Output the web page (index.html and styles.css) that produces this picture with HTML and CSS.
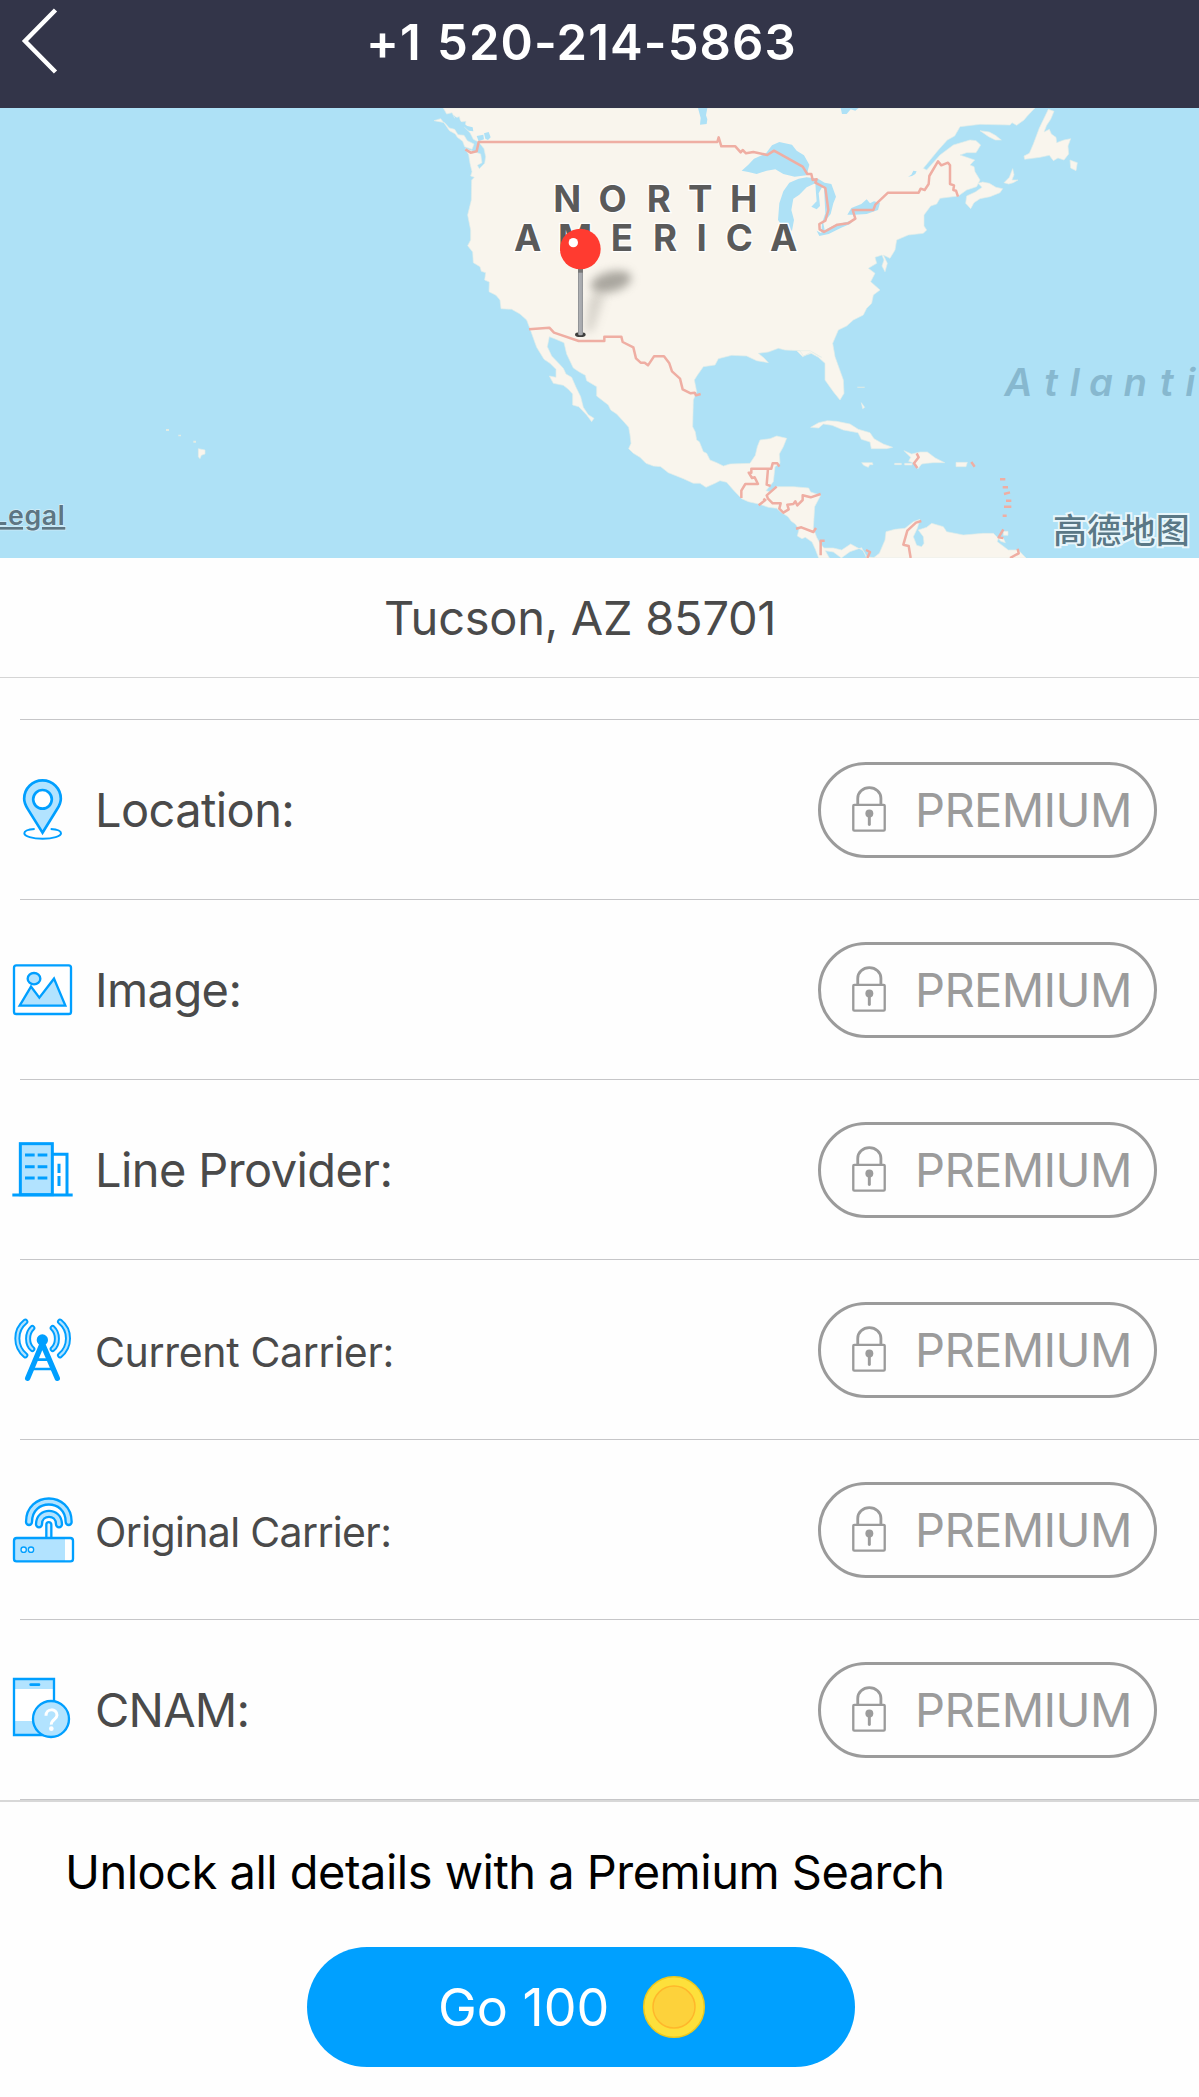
FILE: index.html
```html
<!DOCTYPE html>
<html lang="en">
<head>
<meta charset="utf-8">
<title>+1 520-214-5863</title>
<link rel="stylesheet" href="styles.css">
</head>
<body>
<svg class="defs" width="0" height="0" aria-hidden="true">
  <symbol id="lock" viewBox="156 138 102 139">
    <path d="M173 194V175a35 32 0 0 1 70 0v19" fill="none" stroke="currentColor" stroke-width="8.500"/>
    <rect x="159.500" y="195" width="95" height="78" rx="3" fill="none" stroke="currentColor" stroke-width="7"/>
    <circle cx="208" cy="221" r="12" fill="currentColor"/>
    <path d="M208 224V254" stroke="currentColor" stroke-width="9" stroke-linecap="round"/>
  </symbol>
</svg>

<header class="topbar">
  <svg class="back" width="40" height="68" viewBox="20 7 40 68"><path d="M55.500 10 25 41 55.500 72" fill="none" stroke="#fff" stroke-width="4.500"/></svg>
  <h1 class="title">+1<span class="gap"> </span>520-214-5863</h1>
</header>

<svg class="map" width="1199" height="450" viewBox="-1260 24 3597 1350" preserveAspectRatio="none">
  <defs>
    <filter id="soft" x="-60%" y="-80%" width="220%" height="260%"><feGaussianBlur stdDeviation="15"/></filter>
    <linearGradient id="stem" x1="0" x2="1"><stop offset="0" stop-color="#85878a"/><stop offset=".3" stop-color="#adafb3"/><stop offset=".7" stop-color="#a7a9ad"/><stop offset="1" stop-color="#8b8d90"/></linearGradient>
  </defs>
  <rect x="-1260" y="24" width="3597" height="1350" fill="#aee1f6"/>
  <g class="land">
    <path d="M70 24 80 42 96 38 104 54 118 50 122 66 138 64 134 82 150 98 160 118 176 126 192 146 197 170 194 190 178 206 172 196 186 188 182 162 166 156 136 146 146 164 150 190 156 215 152 228 163 232 155 240 154 300 143 345 152 390 152 420 143 437 158 456 160 488 180 500 184 514 197 518 194 540 208 546 207 575 228 586 240 600 243 626 275 628 300 642 320 660 330 686 342 720 350 742 366 768 372 778 390 790 408 808 408 832 388 828 400 850 430 856 445 868 458 882 458 915 476 920 500 945 515 965 522 955 505 944 490 922 482 890 468 862 455 832 438 822 430 805 418 792 395 768 382 740 388 710 408 718 432 728 440 762 460 804 478 816 496 826 500 842 530 860 530 888 565 915 572 930 590 942 612 966 626 982 630 1004 633 1030 626 1046 640 1060 660 1072 678 1090 700 1098 722 1100 745 1118 790 1136 820 1150 840 1150 858 1162 885 1150 900 1142 920 1147 940 1170 965 1196 985 1205 1020 1213 1045 1222 1070 1225 1082 1236 1104 1250 1114 1264 1126 1272 1137 1288 1132 1308 1146 1316 1156 1312 1176 1326 1186 1348 1196 1374 1228 1374 1216 1352 1240 1356 1264 1374 1290 1355 1325 1343 1340 1374 1360 1374 1378 1360 1395 1320 1398 1295 1425 1288 1455 1285 1480 1265 1500 1258 1492 1285 1480 1310 1490 1336 1505 1340 1512 1330 1510 1310 1495 1290 1520 1282 1535 1270 1570 1280 1580 1295 1630 1305 1690 1300 1720 1300 1735 1315 1732 1325 1745 1335 1765 1350 1795 1350 1818 1374 1370 1374 1340 1370 1330 1352 1310 1342 1292 1332 1265 1350 1240 1344 1212 1344 1200 1330 1190 1312 1180 1285 1184 1220 1202 1186 1172 1176 1166 1164 1120 1160 1070 1160 1050 1175 1038 1172 1048 1160 1060 1145 1065 1100 1080 1090 1078 1062 1090 1040 1100 1015 1070 1008 1050 1016 1020 1020 1012 1040 1006 1066 990 1090 930 1092 910 1098 890 1088 870 1080 860 1060 850 1055 838 1025 830 1020 826 996 818 980 820 900 830 875 823 840 832 826 850 800 885 795 895 776 935 766 980 768 1010 782 1045 788 1032 774 1015 760 1045 756 1075 745 1095 750 1140 752 1150 768 1180 758 1196 768 1205 772 1170 752 1130 752 1148 770 1170 758 1195 772 1215 790 1215 840 1240 875 1260 900 1272 880 1270 840 1245 770 1238 730 1255 690 1280 678 1300 660 1330 645 1340 625 1355 610 1360 585 1380 570 1352 545 1365 520 1345 505 1370 490 1365 472 1386 465 1392 480 1386 498 1395 515 1402 490 1390 465 1410 475 1425 450 1430 420 1465 405 1510 400 1520 390 1512 378 1512 345 1532 318 1550 312 1560 295 1615 288 1640 270 1670 260 1680 240 1665 215 1662 200 1650 195 1664 180 1620 165 1640 158 1668 158 1682 135 1668 122 1650 120 1600 135 1560 165 1520 210 1510 205 1555 150 1582 120 1604 108 1620 80 1680 73 1770 75 1776 68 1790 76 1812 60 1822 48 1845 24Z"/>
    <path d="M42 62 62 56 76 74 88 92 106 102 112 112 128 124 134 140 156 148 162 132 142 122 132 106 114 104 104 88 88 84 74 68Z"/>
    <path d="M1637 310 1652 326 1662 308 1680 296 1710 290 1740 278 1748 266 1728 262 1708 250 1688 246 1674 250 1686 262 1666 276 1640 288Z"/>
    <path d="M1752 248 1768 232 1778 206 1782 224 1776 240 1794 240 1780 248 1766 252Z"/>
    <path d="M1680 92 1708 96 1726 106 1744 120 1726 120 1706 110Z"/>
    <path d="M1885 28 1902 34 1892 58 1880 76 1872 96 1888 88 1894 102 1908 112 1910 128 1932 120 1952 116 1944 138 1946 162 1932 180 1914 174 1900 182 1888 166 1860 172 1814 178 1812 168 1828 160 1840 132 1858 84Z"/>
    <path d="M1950 180 1960 184 1972 188 1968 212 1952 204Z"/>
    <path d="M1172 982 1196 968 1222 962 1250 964 1290 972 1315 988 1350 998 1362 1016 1390 1032 1418 1042 1400 1046 1354 1046 1350 1026 1324 1018 1314 998 1270 990 1236 976 1210 972 1196 984Z"/>
    <path d="M1452 1052 1475 1062 1500 1056 1522 1056 1546 1074 1574 1088 1540 1088 1520 1090 1505 1092 1494 1106 1484 1090 1466 1084 1472 1072Z"/>
    <path d="M1325 1088h32l2 6h-10l-4 8-14-6zM1424 1090h20v4h-20zM1454 1090h22v5h-22zM1608 1087h34l-4 13h-30z"/>
    <path d="M1324 908 1334 922 1328 926ZM1750 1294h14v12h-14zM1734 1314h16l6 14-14-4z"/>
    <path d="M-665 1046-645 1050-645 1062-656 1066-660 1076-665 1070Z"/>
  </g>
  <path class="islet" d="M-762 987h9v6h-9zM-725 1004h8v5h-8zM-680 1022h8v6h-8zM1312 860h22v3h-22z"/>
  <g class="water">
    <path d="M100 44 124 66 142 78 158 82 160 94 146 92 130 78 116 74ZM170 108 190 104 192 118 176 124ZM192 100l14-4 6 16-8 8-8-4z"/>
    <path d="M834 24 862 24 858 46 862 58 860 72 840 74 842 54Z"/>
    <path d="M1262 24h54l-10 8-14-4-12 14h-14z"/>
    <path d="M1038 160 1056 136 1078 126 1116 134 1130 152 1152 166 1168 194 1160 226 1124 230 1090 222 1066 208 1040 212 1010 222 985 216 965 212 985 194 1002 176Z"/>
    <path d="M1160 232 1136 236 1108 248 1090 274 1078 310 1074 360 1092 386 1116 392 1122 360 1114 330 1120 296 1138 284 1160 262 1186 250 1188 280 1190 304 1174 320 1190 328 1200 318 1196 280 1206 262 1212 262 1216 340 1206 370 1204 400 1190 392 1198 408 1226 402 1262 384 1290 372 1302 360 1280 366 1246 374 1214 390 1210 370 1232 342 1240 310 1248 290 1234 252 1214 248 1194 236Z"/>
    <path d="M1282 344 1294 324 1324 312 1340 298 1350 310 1362 304 1380 308 1374 330 1340 342 1304 344Z"/>
    <path d="M1464 230 1474 224 1480 212 1490 214 1486 222 1476 228Z"/>
  </g>
  <g class="border">
    <path d="M136 148 152 158 170 154 176 126H892L896 112 904 139H946L962 157 968 150 978 160 1000 156 1042 165 1062 152 1148 200 1162 222 1174 222 1178 240 1190 238 1186 248 1216 264 1225 330 1216 362 1198 372 1199 388 1212 396 1252 374 1284 370 1306 356 1298 330H1360L1366 314 1404 278H1496L1502 266 1514 270 1526 252 1528 228 1554 184 1564 196 1584 188 1590 196V252L1602 256 1600 270 1608 272 1614 290"/>
    <path d="M327 688 388 683 402 698 476 723H553V710H604L608 726 640 742 648 775 662 788H674L684 796 702 769H732L748 790 756 814 780 836 788 868 812 880 824 878 828 886 842 882"/>
    <path d="M1078 1100 1072 1090H1058L1054 1106H994V1118H986L996 1134 1004 1132 1014 1152H976L964 1172V1194M1044 1106 1040 1154 1052 1158M1070 1160 1040 1186 1044 1196 1058 1210H1082L1078 1226 1090 1238 1106 1228 1102 1214 1120 1212 1126 1204 1132 1216 1148 1200V1186L1172 1192 1202 1182M1016 1216 1036 1200 1030 1196M1128 1286 1144 1282 1180 1296 1188 1284M1214 1322H1202V1366M1338 1350 1350 1356 1342 1374M1504 1263 1488 1268 1462 1292 1450 1334 1466 1338 1472 1374M1490 1060 1496 1072 1482 1090 1492 1104M1654 1086 1664 1100M1740 1138H1756M1748 1162H1764M1752 1182 1770 1177M1758 1202H1774M1752 1220H1774M1748 1247H1760M1750 1288 1736 1312 1750 1314M1770 1374 1796 1360 1793 1346"/>
  </g>
  <g class="continent">
    <text y="337" x="442 578 716 841 971">NORTH</text>
    <text y="454" x="323 465 606 735 845 958 1091">AMERICA</text>
  </g>
  <text class="ocean" y="887" x="1795 1893 1964 2043 2146 2240 2311">Atlanti</text>
  <g>
    <path d="M495 700 505 600 525 575 555 585 520 690Z" fill="#77736b" opacity=".25" filter="url(#soft)"/>
    <ellipse cx="573" cy="545" rx="62" ry="30" transform="rotate(-14 573 545)" fill="#6c6962" opacity=".56" filter="url(#soft)"/>
    <ellipse cx="481" cy="704" rx="16" ry="7" fill="#3e3f3d"/>
    <rect x="474" y="500" width="15" height="206" rx="5" fill="url(#stem)"/>
    <rect x="474" y="506" width="15" height="12" fill="#777"/>
    <circle cx="481" cy="447" r="61" fill="#ff3b30"/>
    <circle cx="460" cy="428" r="14" fill="#fff"/>
  </g>
  <text class="legal" x="-1064" y="1275">Legal</text>
  <text class="amap" x="1899" y="1328" textLength="410" lang="zh">高德地图</text>
</svg>

<section class="address"><p>Tucson, AZ 85701</p></section>

<ul class="details">
  <li class="row">
    <svg class="icon" viewBox="0 60 240 240">
      <path d="M104 237C86 238 73 243 73 250 73 259 97 266 128 266S183 259 183 250C183 243 170 238 152 237" fill="none" stroke="#009fff" stroke-width="6"/>
      <path d="M127.500 248 84 178C77 167 72.500 156 72.500 146A55 55 0 0 1 182.500 146C182.500 156 178 167 171 178Z" fill="#b2e3ff" stroke="#009fff" stroke-width="8"/>
      <circle cx="127.500" cy="148" r="28" fill="#fff" stroke="#009fff" stroke-width="8"/>
    </svg>
    <span class="label loc">Location:</span>
    <button class="pill"><svg><use href="#lock"/></svg><span>PREMIUM</span></button>
  </li>
  <li class="row">
    <svg class="icon" viewBox="0 600 240 240">
      <g stroke="#009fff" stroke-width="7"><rect x="42" y="646" width="171" height="146" rx="7" fill="#fff"/>
      <path d="M59 767 93 710 118 743 162 686 196 767Z" fill="#b2e3ff"/><ellipse cx="102" cy="686" rx="19" ry="17" fill="#b2e3ff"/></g>
    </svg>
    <span class="label img">Image:</span>
    <button class="pill"><svg><use href="#lock"/></svg><span>PREMIUM</span></button>
  </li>
  <li class="row">
    <svg class="icon" viewBox="0 60 240 240">
      <g stroke="#009fff" stroke-width="9"><path d="M157 133H201V255" fill="none"/><rect x="61" y="101" width="96" height="153" fill="#b2e3ff"/>
      <path d="M37 255H218M75 135H104M113 135H142M75 170H104M113 170H142M75 204H104M113 204H142M177 161V189M177 198V228" fill="none"/></g>
    </svg>
    <span class="label line">Line Provider:</span>
    <button class="pill"><svg><use href="#lock"/></svg><span>PREMIUM</span></button>
  </li>
  <li class="row">
    <svg class="icon" viewBox="0 600 240 240">
      <g fill="none" stroke-linecap="round">
        <g stroke="#009fff" stroke-width="18"><path d="M76 635C44 661 44 709 76 736M97 654C80 670 80 702 97 717M180 635C212 661 212 709 180 736M158 654C175 670 175 702 158 717"/></g>
        <g stroke="#b2e3ff" stroke-width="6.500"><path d="M76 635C44 661 44 709 76 736M97 654C80 670 80 702 97 717M180 635C212 661 212 709 180 736M158 654C175 670 175 702 158 717"/></g>
        <g stroke="#009fff"><path d="M83 805 127 700 172 805" stroke-width="16"/><path d="M112 749H143M98 777H157" stroke-width="8"/></g>
      </g>
      <circle cx="127" cy="690" r="17" fill="#009fff"/>
    </svg>
    <span class="label small cur">Current Carrier:</span>
    <button class="pill"><svg><use href="#lock"/></svg><span>PREMIUM</span></button>
  </li>
  <li class="row">
    <svg class="icon" viewBox="0 90 240 240">
      <g fill="none" stroke-linecap="round">
        <path d="M87 186C87 104 206 104 206 186M117 193C117 151 177 151 177 193" stroke="#009fff" stroke-width="25"/>
        <path d="M87 186C87 104 206 104 206 186M117 193C117 151 177 151 177 193" stroke="#b2e3ff" stroke-width="11"/>
      </g>
      <path d="M139 232V194a7.500 7.500 0 0 1 15 0V232" fill="#e0f4ff" stroke="#009fff" stroke-width="7"/>
      <rect x="42" y="234" width="177" height="70" rx="8" fill="#fff"/>
      <path d="M42 234H195V304H42Z" fill="#b2e3ff"/>
      <rect x="42" y="234" width="177" height="70" rx="8" fill="none" stroke="#009fff" stroke-width="7"/>
      <g fill="#e0f4ff" stroke="#009fff" stroke-width="4"><circle cx="71" cy="269" r="8"/><circle cx="93" cy="269" r="8"/></g>
    </svg>
    <span class="label small orig">Original Carrier:</span>
    <button class="pill"><svg><use href="#lock"/></svg><span>PREMIUM</span></button>
  </li>
  <li class="row">
    <svg class="icon" viewBox="0 630 240 240">
      <rect x="42" y="657" width="120" height="168" fill="#fff"/>
      <path d="M42 657H162V687H42ZM42 783H162V825H42Z" fill="#b2e3ff"/>
      <path d="M162 722V657H42V825H130" fill="none" stroke="#009fff" stroke-width="7"/>
      <path d="M92 674H117" stroke="#009fff" stroke-width="8" stroke-linecap="round"/>
      <path d="M150 780H170V840H140Z" fill="#fefefe"/>
      <circle cx="153" cy="777" r="54" fill="#b2e3ff" stroke="#009fff" stroke-width="7"/>
      <path d="M138 767C138 744 171 744 171 766 171 778 153 779 154 794" fill="none" stroke="#fff" stroke-width="9"/><circle cx="154" cy="806" r="7" fill="#fff"/>
    </svg>
    <span class="label cnam">CNAM:</span>
    <button class="pill"><svg><use href="#lock"/></svg><span>PREMIUM</span></button>
  </li>
</ul>

<footer class="unlock">
  <p class="pitch">Unlock all details with a Premium Search</p>
  <button class="go"><span>Go 100</span>
    <svg width="64" height="64" viewBox="0 0 64 64"><circle cx="32" cy="32" r="30.300" fill="#fde03b" stroke="#efc91b" stroke-width="1.500"/><circle cx="32" cy="32" r="21" fill="#fdd23b" stroke="#ffb72b" stroke-width="1.500"/></svg>
  </button>
</footer>
</body>
</html>
```
FILE: styles.css
```css
* { box-sizing: border-box; }
body {
  margin: 0;
  background: #fefefe;
  color: #4a4a4a;
  font-family: Inter, "Liberation Sans", sans-serif;
  overflow: hidden;
}
h1, p, ul { margin: 0; padding: 0; }
ul { list-style: none; }
button { font: inherit; margin: 0; }
.defs { display: block; height: 0; }

.topbar {
  height: 108px;
  padding: 7px 0 0 20px;
  display: flex;
  align-items: flex-start;
  background: #333549;
  color: #fff;
}
.back { flex: none; }
.title {
  margin-left: 306px;
  padding-top: 6px;
  line-height: 60px;
  font-size: 49px;
  font-weight: 600;
  letter-spacing: 1.1px;
  white-space: nowrap;
}
.gap { font-size: 36px; letter-spacing: 6px; }

.map { display: block; }
.land { fill: #f9f5ed; stroke: #e3ede8; stroke-width: 2; stroke-linejoin: round; }
.islet { fill: #e3ece4; }
.water { fill: #aee1f6; }
.border { fill: none; }
.border path { stroke: #efaea3; stroke-width: 7.5; stroke-linejoin: round; }
.continent { font-size: 110px; font-weight: 700; fill: #5a5a5a; stroke: #fff; stroke-width: 8; paint-order: stroke; text-anchor: middle; }
.ocean { font-size: 115px; font-weight: 600; font-style: italic; fill: #87b8cf; text-anchor: middle; }
.legal { font-size: 80px; font-weight: 600; letter-spacing: 2px; fill: #5d7683; stroke: #d5eef8; stroke-width: 4; paint-order: stroke; text-anchor: end; text-decoration: underline; }
.amap { font-family: "Noto Sans CJK SC", sans-serif; font-size: 102px; font-weight: 500; fill: #5a7886; stroke: #e8f6fb; stroke-width: 12; paint-order: stroke; }

.address {
  height: 120px;
  padding: 30px 0 0 384px;
  border-bottom: 1px solid #d5d5d5;
  font-size: 47px;
  line-height: 60px;
  letter-spacing: -.27px;
  white-space: nowrap;
}

.details { margin: 41px 0 0 20px; border-top: 1px solid #c6c6c8; }
.row {
  height: 180px;
  display: flex;
  align-items: flex-start;
  border-bottom: 1px solid #c6c6c8;
}
.icon { flex: none; width: 80px; height: 80px; margin: 50px 0 0 -20px; }
.label {
  flex: 1;
  padding: 60px 0 0 15px;
  font-size: 47px;
  line-height: 60px;
  letter-spacing: -.6px;
  white-space: nowrap;
}
.small { font-size: 41px; padding-top: 62px; }
.cur { letter-spacing: -.33px; }
.orig { letter-spacing: -.65px; }
.cnam { letter-spacing: -.8px; }
.pill {
  flex: none;
  width: 339px;
  height: 96px;
  margin: 42px 42px 0 0;
  padding: 0 0 0 31px;
  display: flex;
  align-items: center;
  border: 3px solid #9b9b9b;
  border-radius: 48px;
  background: none;
  color: #9b9b9b;
  font-size: 47px;
  letter-spacing: -.6px;
}
.pill svg { width: 34px; height: 46px; margin-top: -2px; }
.pill span { margin-left: 29px; line-height: 60px; }

.unlock { border-top: 2px solid #d8d8d8; color: #000; }
.pitch {
  padding: 40px 0 0 65px;
  font-size: 47px;
  line-height: 60px;
  letter-spacing: -.52px;
  white-space: nowrap;
}
.go {
  width: 548px;
  height: 120px;
  margin: 45px 0 0 307px;
  padding: 0 0 0 131px;
  display: flex;
  align-items: center;
  border: 0;
  border-radius: 60px;
  background: #00a0ff;
  color: #fff;
  font-size: 52px;
}
.go svg { margin-left: 33px; }
```
